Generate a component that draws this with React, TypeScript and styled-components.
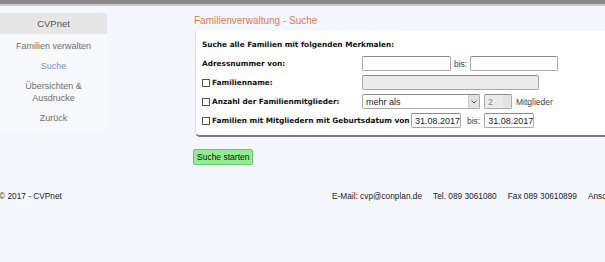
import React from "react";
import styled, { createGlobalStyle } from "styled-components";

const Global = createGlobalStyle`
  html, body { margin: 0; padding: 0; }
  body {
    background: #f4f7fd;
    font-family: "Liberation Sans", Arial, sans-serif;
    overflow: hidden;
    width: 605px;
    height: 262px;
  }
`;

const Page = styled.div`
  width: 605px;
  height: 262px;
  overflow: hidden;
  position: relative;
`;

const TopBar = styled.div`
  height: 4px;
  background: #8a8a8a;
  border-bottom: 2px solid #c9c9c9;
`;

const Main = styled.div`
  display: flex;
  align-items: flex-start;
  width: 700px;
`;

const Sidebar = styled.nav`
  width: 107px;
  margin-top: 7px;
  background: #f8f9fc;
  display: flex;
  flex-direction: column;
  padding-bottom: 5px;
`;

const SideHeader = styled.div`
  background: #e6e6e6;
  color: #555;
  font-size: 9.5px;
  text-align: center;
  height: 21px;
  line-height: 21px;
`;

const SideItem = styled.div<{ $active?: boolean }>`
  color: ${(p) => (p.$active ? "#6b8fd6" : "#6e6e6e")};
  font-size: 9px;
  text-align: center;
  line-height: 12px;
  padding: 4px 0;
`;

const Content = styled.div`
  margin-left: 86px;
  margin-top: 9px;
  display: flex;
  flex-direction: column;
  width: 440px;
`;

const Title = styled.div`
  color: #e2775a;
  font-size: 10px;
  line-height: 12px;
  margin-bottom: 4px;
  margin-left: 1px;
`;

const Panel = styled.div`
  background: #ffffff;
  margin-left: 2px;
  padding: 6px 0 7px 6px;
  border-bottom: 2px solid #7a7a7a;
  border-left: 1px solid #dcdcdc;
  border-bottom-left-radius: 5px;
  display: flex;
  flex-direction: column;
  gap: 4px;
`;

const Row = styled.div`
  display: flex;
  align-items: center;
  height: 15px;
  font-family: "DejaVu Sans", Verdana, sans-serif;
  font-weight: bold;
  font-size: 7.35px;
  color: #111;
`;

const Label = styled.div<{ $w?: number }>`
  width: ${(p) => (p.$w ? `${p.$w}px` : "160px")};
  flex: none;
  display: flex;
  align-items: center;
  white-space: nowrap;
`;

const Box = styled.span`
  display: inline-block;
  flex: none;
  width: 8px;
  height: 8px;
  border: 1px solid #555;
  background: #fff;
  margin-right: 2px;
  box-sizing: border-box;
`;

const Field = styled.div<{ $w: number; $disabled?: boolean }>`
  width: ${(p) => p.$w}px;
  flex: none;
  height: 15px;
  box-sizing: border-box;
  border: 1px solid #a9a9a9;
  border-top-color: #8a8a8a;
  border-radius: 2px;
  background: ${(p) => (p.$disabled ? "#ebebeb" : "#fff")};
  font-family: "Liberation Sans", Arial, sans-serif;
  font-weight: normal;
  font-size: 9px;
  color: ${(p) => (p.$disabled ? "#888" : "#222")};
  display: flex;
  align-items: center;
  padding-left: 3px;
  position: relative;
`;

const Plain = styled.span<{ $ml?: number; $mr?: number }>`
  font-family: "Liberation Sans", Arial, sans-serif;
  font-weight: normal;
  font-size: 8.5px;
  color: #444;
  margin-left: ${(p) => p.$ml ?? 0}px;
  margin-right: ${(p) => p.$mr ?? 0}px;
`;

const Arrow = styled.div`
  position: absolute;
  right: 0;
  top: 0;
  bottom: 0;
  width: 10px;
  background: #e2e2e2;
  border-left: 1px solid #c8c8c8;
  display: flex;
  align-items: center;
  justify-content: center;
`;

const Spinner = styled.div`
  position: absolute;
  right: 0;
  top: 0;
  bottom: 0;
  width: 8px;
  background: #e4e4e4;
`;

const Button = styled.button`
  align-self: flex-start;
  margin-top: 12px;
  background: #8fee8f;
  border: 1px solid #6cc46c;
  border-radius: 2px;
  font-family: "Liberation Sans", Arial, sans-serif;
  font-size: 8.5px;
  color: #111;
  height: 16px;
  padding: 0 3px;
  line-height: 14px;
`;

const Footer = styled.footer`
  display: flex;
  align-items: center;
  margin-top: 26px;
  width: 700px;
  font-size: 8.3px;
  color: #222;
`;

const Copy = styled.div`
  width: 333px;
  flex: none;
  margin-left: -1px;
`;

const Contacts = styled.div`
  display: flex;
  gap: 11px;
  white-space: nowrap;
`;

export default function App() {
  return (
    <Page>
      <Global />
      <TopBar />
      <Main>
        <Sidebar>
          <SideHeader>CVPnet</SideHeader>
          <SideItem style={{ marginTop: 2 }}>Familien verwalten</SideItem>
          <SideItem $active>Suche</SideItem>
          <SideItem>
            Übersichten &amp;
            <br />
            Ausdrucke
          </SideItem>
          <SideItem>Zurück</SideItem>
        </Sidebar>
        <Content>
          <Title>Familienverwaltung - Suche</Title>
          <Panel>
            <Row>
              <Label $w={300}>Suche alle Familien mit folgenden Merkmalen:</Label>
            </Row>
            <Row>
              <Label>Adressnummer von:</Label>
              <Field $w={89} />
              <Plain $ml={3} $mr={3}>bis:</Plain>
              <Field $w={88} />
            </Row>
            <Row>
              <Label>
                <Box />
                Familienname:
              </Label>
              <Field $w={177} $disabled />
            </Row>
            <Row>
              <Label>
                <Box />
                Anzahl der Familienmitglieder:
              </Label>
              <Field $w={118}>
                mehr als
                <Arrow>
                  <svg width="6" height="4" viewBox="0 0 6 4">
                    <path d="M0.5 0.5 L3 3 L5.5 0.5" fill="none" stroke="#555" strokeWidth="1" />
                  </svg>
                </Arrow>
              </Field>
              <Field $w={28} $disabled style={{ marginLeft: 4 }}>
                2
                <Spinner />
              </Field>
              <Plain $ml={4}>Mitglieder</Plain>
            </Row>
            <Row>
              <Label $w={209}>
                <Box />
                Familien mit Mitgliedern mit Geburtsdatum von
              </Label>
              <Field $w={50}>31.08.2017</Field>
              <Plain $ml={6} $mr={4}>bis:</Plain>
              <Field $w={50}>31.08.2017</Field>
            </Row>
          </Panel>
          <Button>Suche starten</Button>
        </Content>
      </Main>
      <Footer>
        <Copy>© 2017 - CVPnet</Copy>
        <Contacts>
          <span>E-Mail: cvp@conplan.de</span>
          <span>Tel. 089 3061080</span>
          <span>Fax 089 30610899</span>
          <span>Anschrift</span>
        </Contacts>
      </Footer>
    </Page>
  );
}
